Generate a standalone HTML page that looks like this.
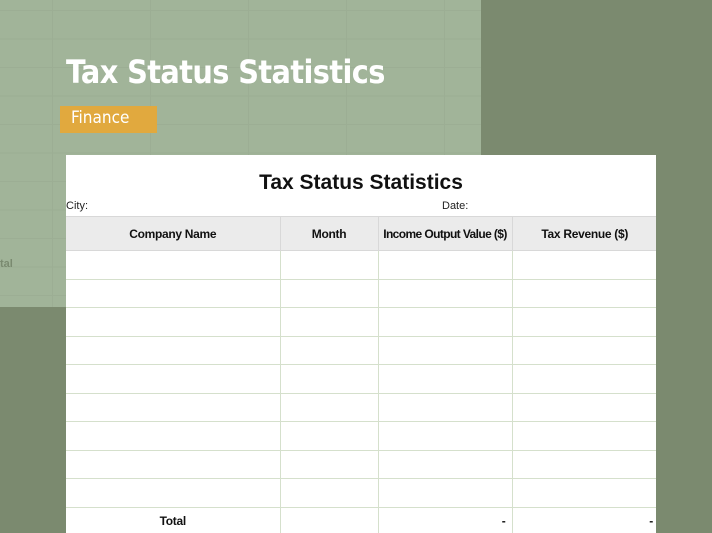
<!DOCTYPE html>
<html><head><style>
body{margin:0;width:712px;height:533px;overflow:hidden;background:#7b8a6f;position:relative;font-family:"Liberation Sans",sans-serif}
.lt{position:absolute;left:0;top:0;width:481px;height:307px;background:#a1b499;
background-image:linear-gradient(#9cae94 1px,transparent 1px),linear-gradient(90deg,#9cae94 1px,transparent 1px);background-size:100% 28.5px,98px 100%;background-position:0 10px,52px 0}
.h1{position:absolute;left:66px;top:53px;color:#fff;font-size:32px;font-weight:bold;font-family:"DejaVu Sans Condensed","Liberation Sans",sans-serif;letter-spacing:-0.6px}
.badge{position:absolute;left:60px;top:106px;width:97px;height:27px;background:#e1a93e;color:#fff;font-size:17px;font-family:"DejaVu Sans Condensed",sans-serif;line-height:25px;padding-left:11px;box-sizing:border-box}
.tal{position:absolute;left:0;top:258px;color:#7a8a70;font-size:11px;font-weight:bold}
.card{position:absolute;left:66px;top:155px;width:590px;height:378px;background:#fff;overflow:hidden}
.t{position:absolute;left:0;width:590px;top:16px;text-align:center;font-size:21px;font-weight:bold;color:#111}
.s{position:absolute;top:45px;font-size:11px;color:#222}
table{position:absolute;left:0;top:61px;border-collapse:collapse;width:591px;table-layout:fixed}
td{border:1px solid #d5e0cc;height:27.5px;padding:0;font-size:12px;font-weight:bold;color:#111;text-align:center;white-space:nowrap;letter-spacing:-0.3px}
tr.hd td{background:#ebebeb;height:33px;border-color:#d8d8d8}
td:first-child{border-left:none}
td:last-child{border-right:none}
</style></head><body>
<div class="lt"></div>
<div class="h1">Tax Status Statistics</div>
<div class="badge">Finance</div>
<div class="tal">tal</div>
<div class="card">
<div class="t">Tax Status Statistics</div>
<div class="s" style="left:0">City:</div>
<div class="s" style="left:376px">Date:</div>
<table>
<colgroup><col style="width:214px"><col style="width:98px"><col style="width:134px"><col></colgroup>
<tr class="hd"><td>Company Name</td><td>Month</td><td style="letter-spacing:-0.6px">Income Output Value ($)</td><td>Tax Revenue ($)</td></tr>
<tr><td></td><td></td><td></td><td></td></tr>
<tr><td></td><td></td><td></td><td></td></tr>
<tr><td></td><td></td><td></td><td></td></tr>
<tr><td></td><td></td><td></td><td></td></tr>
<tr><td></td><td></td><td></td><td></td></tr>
<tr><td></td><td></td><td></td><td></td></tr>
<tr><td></td><td></td><td></td><td></td></tr>
<tr><td></td><td></td><td></td><td></td></tr>
<tr><td></td><td></td><td></td><td></td></tr>
<tr><td>Total</td><td></td><td style="text-align:right;padding-right:6px">-</td><td style="text-align:right;padding-right:4px">-</td></tr>
</table>
</div>
</body></html>
